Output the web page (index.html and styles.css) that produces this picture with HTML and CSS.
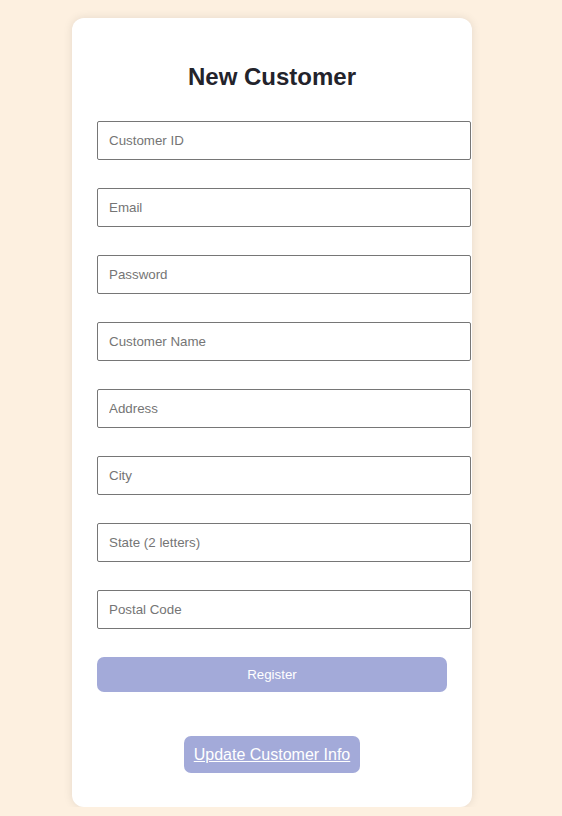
FILE: index.html
```html
<!DOCTYPE html>
<html lang="en">
<head>
  <meta charset="UTF-8" />
  <meta name="viewport" content="width=device-width, initial-scale=1" />
  <title>New Customer</title>
  <link rel="stylesheet" href="styles.css">
</head>
<body>

  <div class="container">
    <h2>New Customer</h2>

    <form id="customerForm">
      <input type="text" placeholder="Customer ID">
      <input type="email" placeholder="Email">
      <input type="password" placeholder="Password">
      <input type="text" placeholder="Customer Name">
      <input type="text" placeholder="Address">
      <input type="text" placeholder="City">
      <input type="text" placeholder="State (2 letters)">
      <input type="text" placeholder="Postal Code">
      <button type="submit">Register</button>
    </form>

    <div class="links">
      <a href="#" class="link-btn">Update Customer Info</a>
    </div>
  </div>

</body>
</html>
```

FILE: styles.css
```css
* {
  margin: 0;
  padding: 0;
}

body {
  background: #fdf0e0;
  font-family: 'Liberation Sans', Arial, sans-serif;
  padding-top: 18px;
}

.container {
  width: 350px;
  padding: 25px;
  margin-left: 72px;
  background: #fff;
  border-radius: 12px;
  box-shadow: 0 0 10px rgba(0, 0, 0, 0.1);
}

h2 {
  font-size: 24px;
  font-weight: bold;
  color: #23232b;
  text-align: center;
  line-height: 28px;
  margin-top: 20px;
  margin-bottom: 30px;
}

form input {
  display: block;
  width: 350px;
  height: 37px;
  padding: 0 11px;
  margin-bottom: 28px;
  border: 1px solid #767676;
  border-radius: 2px;
  font-family: 'Liberation Sans', Arial, sans-serif;
  font-size: 13.333px;
  color: #333;
}

form input::placeholder {
  color: #757575;
}

form button {
  display: block;
  width: 350px;
  height: 35px;
  border: none;
  border-radius: 7px;
  background: #a3aad9;
  color: #fff;
  font-family: 'Liberation Sans', Arial, sans-serif;
  font-size: 13.333px;
  cursor: pointer;
}

.links {
  text-align: center;
  margin-top: 44px;
  padding-bottom: 9px;
}

.link-btn {
  display: inline-block;
  padding: 10px;
  line-height: 17px;
  font-size: 16px;
  color: #fff;
  background: #a3aad9;
  border-radius: 7px;
  text-decoration: underline;
}
```
